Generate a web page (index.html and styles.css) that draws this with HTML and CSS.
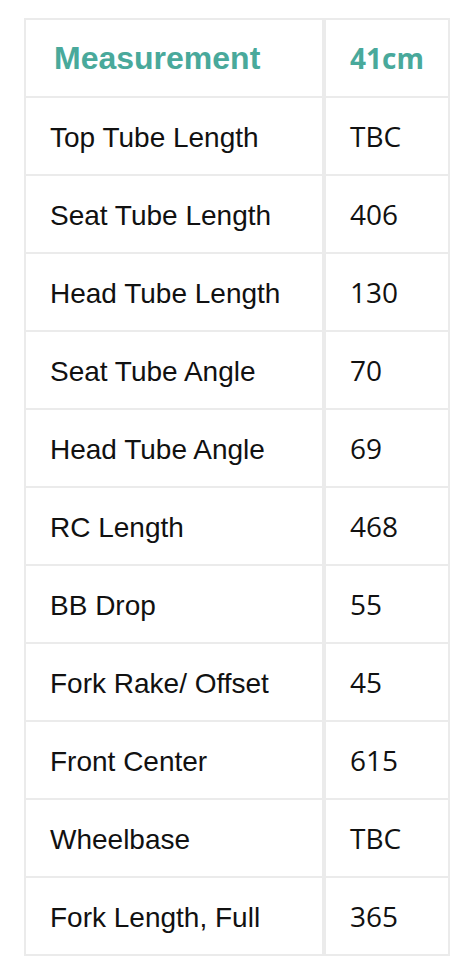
FILE: index.html
```html
<!DOCTYPE html>
<html lang="en">
<head>
<meta charset="utf-8">
<title>Geometry</title>
<link rel="stylesheet" href="styles.css">
</head>
<body>
<div class="geo" role="table">
  <div class="cell head label" role="columnheader">Measurement</div>
  <div class="cell head value" role="columnheader">41cm</div>
  <div class="cell label">Top Tube Length</div><div class="cell value">TBC</div>
  <div class="cell label">Seat Tube Length</div><div class="cell value">406</div>
  <div class="cell label">Head Tube Length</div><div class="cell value">130</div>
  <div class="cell label">Seat Tube Angle</div><div class="cell value">70</div>
  <div class="cell label">Head Tube Angle</div><div class="cell value">69</div>
  <div class="cell label">RC Length</div><div class="cell value">468</div>
  <div class="cell label">BB Drop</div><div class="cell value">55</div>
  <div class="cell label">Fork Rake/ Offset</div><div class="cell value">45</div>
  <div class="cell label">Front Center</div><div class="cell value">615</div>
  <div class="cell label">Wheelbase</div><div class="cell value">TBC</div>
  <div class="cell label">Fork Length, Full</div><div class="cell value">365</div>
</div>
</body>
</html>
```
FILE: styles.css
```css
html, body {
  margin: 0;
  padding: 0;
  background: #ffffff;
}
body {
  padding: 18px 0 0 24px;
}
.geo {
  display: grid;
  grid-template-columns: 296px 122px;
  grid-auto-rows: 76px;
  row-gap: 2px;
  column-gap: 4px;
  padding: 2px;
  width: 422px;
  background: #ebebeb;
}
.cell {
  background: #ffffff;
  display: flex;
  align-items: center;
  padding-left: 24px;
  color: #111111;
  font-size: 28px;
  white-space: nowrap;
}
.label {
  font-family: "Liberation Sans", Arial, sans-serif;
  padding-top: 3px;
}
.value {
  font-family: "Open Sans", sans-serif;
}
.head {
  color: #49a99b;
  font-weight: bold;
}
.head.label {
  font-size: 32px;
  padding-left: 28px;
  padding-top: 0;
}
.head.value {
  font-size: 28px;
}
```
